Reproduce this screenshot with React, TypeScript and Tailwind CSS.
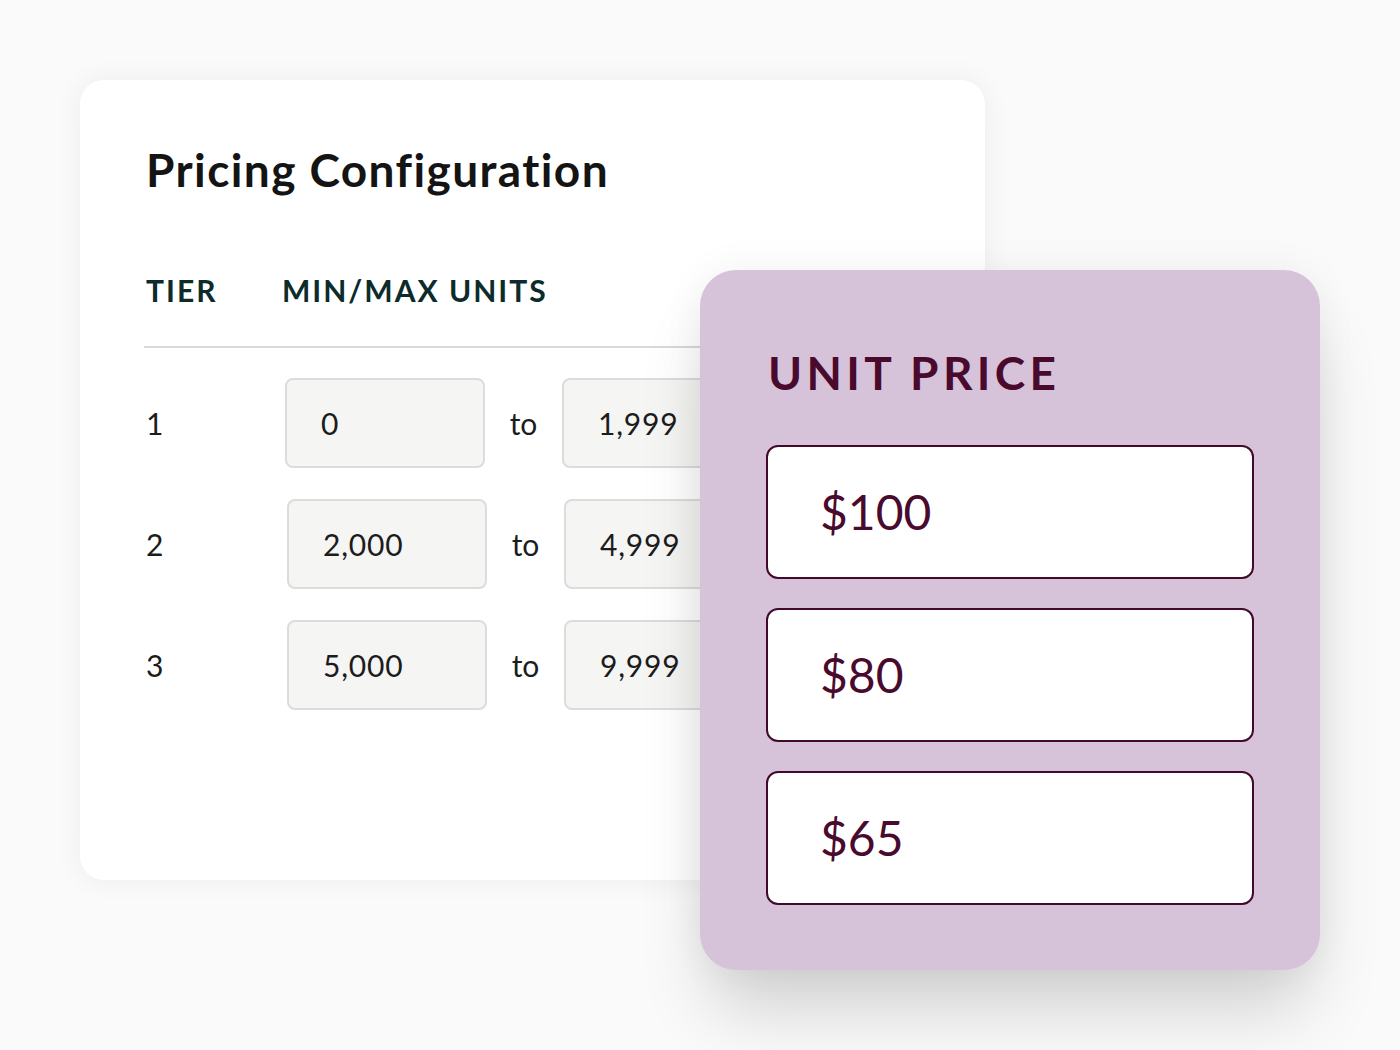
import React from 'react';

const tiers = [
  { tier: '1', min: '0', max: '1,999', shift: '' },
  { tier: '2', min: '2,000', max: '4,999', shift: 'ml-[2px]' },
  { tier: '3', min: '5,000', max: '9,999', shift: 'ml-[2px]' },
];

const prices = ['$100', '$80', '$65'];

function TierRow({ tier, min, max, shift }: { tier: string; min: string; max: string; shift: string }) {
  return (
    <div className="flex items-center h-[90px]">
      <div className="w-[141px] pl-[2px] text-[30px] text-[#1c1c1c]">{tier}</div>
      <div className={`w-[200px] h-[90px] flex items-center pl-[34px] rounded-[8px] border-2 border-[#dcdcdc] bg-[#f5f5f4] text-[30px] tracking-[0.8px] text-[#1c1c1c] ${shift}`}>
        {min}
      </div>
      <div className="w-[77px] text-center text-[30px] text-[#1c1c1c]">to</div>
      <div className="w-[200px] h-[90px] flex items-center pl-[34px] rounded-[8px] border-2 border-[#dcdcdc] bg-[#f5f5f4] text-[30px] tracking-[0.8px] text-[#1c1c1c]">
        {max}
      </div>
    </div>
  );
}

export default function App() {
  return (
    <div className="relative w-[1400px] h-[1050px] bg-[#fafafa] pt-[80px] pl-[80px] font-['Lato',sans-serif]">
      {/* Pricing configuration card */}
      <div className="w-[905px] h-[800px] rounded-[24px] bg-white shadow-[0_0_28px_rgba(0,0,0,0.06)] pt-[67px] px-[64px]">
        <h1 className="text-[46px] leading-none font-bold tracking-[1.4px] [font-variant-ligatures:none] text-[#141414] pl-[2px]">
          Pricing Configuration
        </h1>
        <div className="flex mt-[82px] pl-[2px] text-[30px] leading-none font-bold tracking-[2px] text-[#0d2b2b]">
          <div className="w-[136px]">TIER</div>
          <div>MIN/MAX UNITS</div>
        </div>
        <div className="mt-[41px] h-[2px] bg-[#d9d9d9]" />
        <div className="mt-[30px] flex flex-col gap-[31px]">
          {tiers.map((t) => (
            <TierRow key={t.tier} {...t} />
          ))}
        </div>
      </div>

      {/* Unit price overlay card */}
      <div className="absolute left-[700px] top-[270px] w-[620px] h-[700px] rounded-[36px] bg-[#d7c3d9] shadow-[0_50px_70px_-10px_rgba(0,0,0,0.16),0_0_40px_rgba(0,0,0,0.06)] pt-[80px] px-[66px]">
        <h2 className="text-[46px] leading-none font-bold tracking-[4.3px] text-[#4a0a2e] pl-[2px]">UNIT PRICE</h2>
        <div className="mt-[49px] flex flex-col gap-[29px]">
          {prices.map((p) => (
            <div
              key={p}
              className="w-[488px] h-[134px] flex items-center pl-[52px] rounded-[12px] border-2 border-[#420a2a] bg-white text-[48px] text-[#4a0a2e]"
            >
              {p}
            </div>
          ))}
        </div>
      </div>
    </div>
  );
}
